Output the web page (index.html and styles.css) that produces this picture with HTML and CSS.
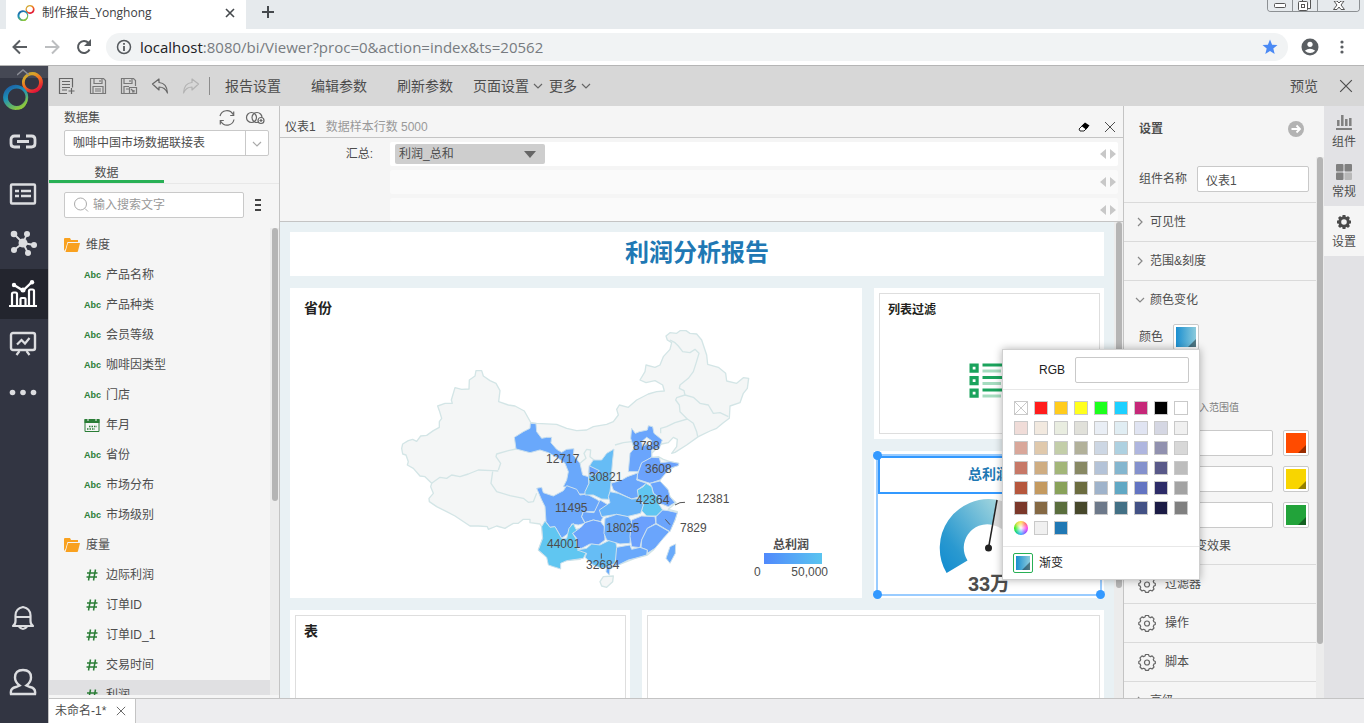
FILE: index.html
```html
<!DOCTYPE html>
<html lang="zh-CN">
<head>
<meta charset="utf-8">
<title>制作报告_Yonghong</title>
<link rel="stylesheet" href="styles.css">
</head>
<body>
<svg class="defs" width="0" height="0" aria-hidden="true">
  <defs>
    <linearGradient id="ringA" x1="0" y1="0" x2=".6" y2="1"><stop offset="0" stop-color="#b7a02e"/><stop offset=".3" stop-color="#d8a52a"/><stop offset=".55" stop-color="#f3701f"/><stop offset="1" stop-color="#e0103a"/></linearGradient>
    <linearGradient id="ringB" x1="0" y1="0" x2=".5" y2="1"><stop offset="0" stop-color="#1d4fa0"/><stop offset=".5" stop-color="#1d93b8"/><stop offset="1" stop-color="#86c440"/></linearGradient>
    <linearGradient id="gaugeFill" x1="0" y1="1" x2="1" y2="0"><stop offset="0" stop-color="#108bd0"/><stop offset=".3" stop-color="#2a99d0"/><stop offset="1" stop-color="#a3d6de"/></linearGradient>
    <symbol id="logo" viewBox="0 0 40 40">
      <path fill="url(#ringA)" fill-rule="evenodd" d="M29 2a10 10 0 1 1-.01 0zM28.500 5a6.800 6.800 0 1 0 .01 0z"/>
      <path fill="url(#ringB)" fill-rule="evenodd" d="M13 14a12 12 0 1 1-.01 0zM14 17.500a8.400 8.400 0 1 0 .01 0z"/>
      <path fill="#8cc63f" d="M23.500 25q.5 6-5 9.500-3.500 2-7 1.500 5 3.500 9.500-.5 4-4 2.500-10.500z"/>
    </symbol>
    <symbol id="gear" viewBox="0 0 18 18"><path fill="none" stroke="#666" stroke-width="1.200" stroke-linejoin="round" d="M7 3 7.500 1.500h3L11 3l1.500.6 1.600-.7 1.900 2-.7 1.600.5 1.300 1.500.7v2l-1.500.6-.5 1.400.7 1.500-1.900 2-1.600-.7-1.500.6-.5 1.400H7.500L7 15.900l-1.500-.6-1.500.7-2-2 .7-1.500-.5-1.400L.8 10.500v-2l1.400-.7.5-1.300L2 4.900l2-2 1.500.7z"/><circle cx="9" cy="9.500" r="2.500" fill="none" stroke="#666" stroke-width="1.200"/></symbol>
    <symbol id="folder" viewBox="0 0 16 14"><path fill="#f9a11f" d="M0 13V1q0-1 1-1h5l1 2h7v2H3.500L1.500 11zM4 5h12l-2 8q0 1-1 1H1.500z"/></symbol>
    <symbol id="hash" viewBox="0 0 12 12"><path fill="none" stroke="#2a7d36" stroke-width="1.500" d="M4.500.5l-2 11M9.500.5l-2 11M1 4h10.500M.5 8H11"/></symbol>
    <symbol id="cross" viewBox="0 0 12 12"><path fill="none" stroke="currentColor" d="M1 1l10 10M11 1L1 11"/></symbol>
    <symbol id="chev" viewBox="0 0 10 10"><path fill="none" stroke="currentColor" stroke-width="1.200" d="M1 3l4 4 4-4"/></symbol>
    <symbol id="chevr" viewBox="0 0 10 10"><path fill="none" stroke="currentColor" stroke-width="1.200" d="M3 1l4 4-4 4"/></symbol>
    <symbol id="pager" viewBox="0 0 16 10"><path fill="#c8c8c8" d="M6 0v10L0 5zM10 0v10l6-5z"/></symbol>
  </defs>
</svg>

<header class="browser">
  <div class="tabstrip">
    <div class="tab">
      <svg width="18" height="18"><use href="#logo"/></svg>
      <span class="tab-title">制作报告_Yonghong</span>
      <button class="plain" aria-label="关闭标签页"><svg class="ink" width="10" height="10" viewBox="0 0 10 10"><path stroke="#45494d" stroke-width="1.600" d="M1 1l8 8M9 1L1 9"/></svg></button>
    </div>
    <button class="plain newtab" aria-label="新标签页"><svg width="12" height="12" viewBox="0 0 12 12"><path stroke="#45494d" stroke-width="2" d="M6 0v12M0 6h12"/></svg></button>
    <div class="winbtns">
      <button aria-label="最小化"><svg width="12" height="5" viewBox="0 0 12 5"><rect x=".5" y=".5" width="11" height="4" rx="1" fill="#fff" stroke="#555"/></svg></button>
      <button aria-label="还原"><svg width="14" height="12" viewBox="0 0 14 12"><path fill="#fff" stroke="#555" d="M4.500 0v2M12.500 0v8.500h-3"/><rect x=".5" y="1.500" width="9" height="9" rx="1" fill="#fff" stroke="#555"/><rect x="3.500" y="4.500" width="3" height="3" fill="none" stroke="#555"/></svg></button>
      <button class="wide" aria-label="关闭"><svg width="12" height="10" viewBox="0 0 12 10"><path fill="#fff" stroke="#555" d="M1 0l3 4-3.500 4.500h3.500l2-2.500 2 2.500h3.500L8 4l3-4H8L6 2 4 0z"/></svg></button>
    </div>
  </div>
  <div class="navbar">
    <button class="plain" aria-label="后退"><svg width="16" height="16" viewBox="0 0 16 16"><path fill="none" stroke="#5a5e62" stroke-width="2" d="M15 8H2M8 1.500L1.500 8 8 14.500"/></svg></button>
    <button class="plain" aria-label="前进"><svg width="16" height="16" viewBox="0 0 16 16"><path fill="none" stroke="#bcbec0" stroke-width="2" d="M1 8h13M8 1.500L14.500 8 8 14.500"/></svg></button>
    <button class="plain" aria-label="刷新"><svg width="16" height="16" viewBox="0 0 16 16"><path fill="none" stroke="#55595d" stroke-width="2" d="M13.500 10.500A6 6 0 1 1 12.500 4"/><path fill="#55595d" d="M15 0v7H8z"/></svg></button>
    <div class="omnibox">
      <svg width="16" height="16" viewBox="0 0 16 16"><circle cx="8" cy="8" r="6.500" fill="none" stroke="#55595d" stroke-width="1.500"/><path stroke="#55595d" stroke-width="1.800" d="M8 7v5M8 4v1.800"/></svg>
      <div class="url" role="textbox" aria-label="地址" contenteditable="true" spellcheck="false"><span class="host">localhost</span>:8080/bi/Viewer?proc=0&amp;action=index&amp;ts=20562</div>
      <svg width="16" height="16" viewBox="0 0 16 16"><path fill="#4a89f4" d="M8 .5l2.100 5.200 5.400.3-4.200 3.500 1.400 5.500L8 12l-4.700 3 1.400-5.500L.5 6l5.400-.3z"/></svg>
    </div>
    <button class="plain" aria-label="用户"><svg width="18" height="18" viewBox="0 0 18 18"><circle cx="9" cy="9" r="8.500" fill="#5a5e62"/><circle cx="9" cy="6.300" r="2.600" fill="#fff"/><path fill="#fff" d="M3.800 12.800q5.200-4 10.400 0-5 4.500-10.400 0z"/></svg></button>
    <button class="plain" aria-label="菜单"><svg width="4" height="14" viewBox="0 0 4 14"><g fill="#5a5e62"><circle cx="2" cy="2" r="1.600"/><circle cx="2" cy="7" r="1.600"/><circle cx="2" cy="12" r="1.600"/></g></svg></button>
  </div>
</header>

<div class="app">
  <nav class="sidenav">
    <div class="brand">
      <svg class="brand-chev" width="12" height="8" viewBox="0 0 12 8"><path fill="none" stroke="#8b8d95" stroke-width="1.500" d="M0 7l6-5 6 5"/></svg>
      <svg class="brand-logo" width="42" height="42"><use href="#logo"/></svg>
    </div>
    <a href="#" aria-label="连接"><svg width="28" height="28" viewBox="0 0 28 28"><path fill="none" stroke="#dcdde0" stroke-width="2.800" d="M11 6H5.500Q2 6 2 9.500v4q0 3.500 3.500 3.500H11M17 6h5.500Q26 6 26 9.500v4q0 3.500-3.500 3.500H17M8 11.500h12"/></svg></a>
    <a href="#" aria-label="数据集"><svg width="28" height="28" viewBox="0 0 28 28"><rect x="2" y="4.500" width="24" height="19" rx="1" fill="none" stroke="#dcdde0" stroke-width="2.400"/><path stroke="#dcdde0" stroke-width="2.600" d="M6 11h4M12 11h10M6 16h4M12 16h10"/></svg></a>
    <a href="#" aria-label="挖掘"><svg width="28" height="28" viewBox="0 0 28 28"><path stroke="#dcdde0" stroke-width="1.800" d="M14 13L5 4M14 13l4-9M14 13l11 2M14 13L5 20M14 13l5 10"/><g fill="#dcdde0"><circle cx="14" cy="13" r="4.500"/><circle cx="5" cy="4" r="3.300"/><circle cx="18" cy="4" r="3"/><circle cx="25" cy="15" r="3"/><circle cx="5" cy="20" r="3"/><circle cx="19" cy="23" r="3"/></g></svg></a>
    <a href="#" class="active" aria-label="制作报告"><svg width="28" height="28" viewBox="0 0 28 28"><path fill="none" stroke="#fff" stroke-width="2.200" d="M0 26h28M3 26V14q0-1.500 1.500-1.500h2Q8 12.500 8 14v12M11.500 26v-7q0-1 1-1h3q1 0 1 1v7M20 26V11q0-1.500 1.500-1.500h2Q25 9.500 25 11v15"/><path fill="none" stroke="#fff" stroke-width="2.400" d="M5 5l9 5.500L23 2"/><circle cx="5" cy="5" r="2.200" fill="#fff"/><circle cx="14" cy="10" r="2.500" fill="#fff"/><circle cx="23" cy="2.200" r="2.200" fill="#fff"/></svg></a>
    <a href="#" aria-label="查看报告"><svg width="28" height="28" viewBox="0 0 28 28"><rect x="2" y="3" width="24" height="17" rx="2" fill="none" stroke="#dcdde0" stroke-width="2.400"/><path fill="none" stroke="#dcdde0" stroke-width="2.200" d="M8 14.500l4.500-4.500 3.500 3.500L20.500 8M10.500 21L7.500 25M17.500 21l3 4"/></svg></a>
    <a href="#" aria-label="更多"><svg width="28" height="28" viewBox="0 0 28 28"><g fill="#dcdde0"><circle cx="3.500" cy="12.500" r="2.800"/><circle cx="14" cy="12.500" r="2.800"/><circle cx="24.500" cy="12.500" r="2.800"/></g></svg></a>
    <div class="spacer"></div>
    <a href="#" class="tall" aria-label="通知"><svg width="28" height="28" viewBox="0 0 28 28"><path fill="none" stroke="#dcdde0" stroke-width="2.200" stroke-linejoin="round" d="M4 22q2.500-1.500 2.500-5v-5.500q0-7 7.500-8.500 7.500 1.500 7.500 8.500V17q0 3.500 2.500 5zM6.500 13h15M10 22.500q4 5 8 0"/></svg></a>
    <a href="#" class="tall" aria-label="用户"><svg width="28" height="28" viewBox="0 0 28 28"><path fill="none" stroke="#dcdde0" stroke-width="2.400" d="M2 26q-1-6 5-7l3.500-1.500Q6 14 6 9.500 6 2 14 2t8 7.500q0 4.500-4.500 8L21 19q6 1 5 7z"/></svg></a>
  </nav>

  <div class="workspace">
    <div class="toolbar">
      <div class="tools">
        <button class="plain" aria-label="新建"><svg width="18" height="18" viewBox="0 0 18 18"><path fill="none" stroke="#666" stroke-width="1.200" d="M9 16.500H1.500V1.500h13v9M4 4.500h8M4 7.500h8M4 10.500h8M4 13h5M13.500 11v6M10.500 14h6"/></svg></button>
        <button class="plain" aria-label="保存"><svg width="18" height="18" viewBox="0 0 18 18"><path fill="none" stroke="#777" stroke-width="1.200" d="M1.500 1.500h13l2 2v13h-15zM5 2v4.500h8V2M11 3v2M4 16V9.500h10V16M6 12h6M6 14h6"/></svg></button>
        <button class="plain" aria-label="另存为"><svg width="18" height="18" viewBox="0 0 18 18"><path fill="none" stroke="#777" stroke-width="1.200" d="M9 16.500H1.500v-15h12l2 2V9M4 2v4.500h8V2M10 3v2M4 16V9.500h5M6 12h3M9.500 10.500h7v6h-7zM11 12l3 3M14 13v2h-2"/></svg></button>
        <button class="plain" aria-label="撤销"><svg width="18" height="18" viewBox="0 0 18 18"><path fill="none" stroke="#666" stroke-width="1.200" stroke-linejoin="round" d="M1.500 7L8 2v3.500q8 .5 8.500 10.500Q14 10 8 10v3z"/></svg></button>
        <button class="plain" aria-label="重做"><svg width="18" height="18" viewBox="0 0 18 18"><path fill="none" stroke="#b3b3b3" stroke-width="1.200" stroke-linejoin="round" d="M16.500 7L10 2v3.500Q2 6 1.500 16 4 10 10 10v3z"/></svg></button>
      </div>
      <div class="menus">
        <button class="menu">报告设置</button>
        <button class="menu">编辑参数</button>
        <button class="menu">刷新参数</button>
      </div>
      <button class="menu drop">页面设置 <svg width="10" height="10"><use href="#chev"/></svg></button>
      <button class="menu drop">更多 <svg width="10" height="10"><use href="#chev"/></svg></button>
      <div class="spacer"></div>
      <button class="menu">预览</button>
      <button class="plain exit" aria-label="退出"><svg width="14" height="14"><use href="#cross"/></svg></button>
    </div>

    <div class="main">
      <aside class="data">
        <div class="data-head">
          <label for="dataset">数据集</label>
          <span class="data-icons">
            <button class="plain" aria-label="刷新数据"><svg width="18" height="18" viewBox="0 0 18 18"><path fill="none" stroke="#666" stroke-width="1.200" d="M2 7a7 7 0 0 1 13-1.500M16 10.500a7 7 0 0 1-13 2M15.700 2.500v4h-3.500M2.300 15.500v-4h3.500"/></svg></button>
            <button class="plain" aria-label="关联数据"><svg width="20" height="14" viewBox="0 0 20 14"><g fill="none" stroke="#666" stroke-width="1.200"><circle cx="6.500" cy="6.500" r="5"/><circle cx="12" cy="6.500" r="5"/><circle cx="16" cy="9.500" r="3" fill="#f5f5f5"/><path d="M14.500 9.500h3M16 8v3"/></g></svg></button>
          </span>
        </div>
        <div class="dataset">
          <select id="dataset"><option>咖啡中国市场数据联接表</option></select>
          <svg width="10" height="10"><use href="#chev"/></svg>
        </div>
        <div class="data-tabs"><button class="data-tab">数据</button></div>
        <div class="search-row">
          <div class="search">
            <svg width="16" height="16" viewBox="0 0 16 16"><circle cx="7.500" cy="7" r="6" fill="none" stroke="#aaa"/><path stroke="#aaa" d="M12 11.500l3 3"/></svg>
            <input type="text" aria-label="搜索" placeholder="输入搜索文字">
          </div>
          <button class="plain" aria-label="选项"><svg width="8" height="14" viewBox="0 0 8 14"><path stroke="#444" stroke-width="2" d="M1 2h6M1 7h6M1 12h6"/></svg></button>
        </div>
        <div class="tree-wrap">
          <ul class="tree">
            <li class="group"><svg width="16" height="14"><use href="#folder"/></svg>维度</li>
            <li><b class="abc">Abc</b>产品名称</li>
            <li><b class="abc">Abc</b>产品种类</li>
            <li><b class="abc">Abc</b>会员等级</li>
            <li><b class="abc">Abc</b>咖啡因类型</li>
            <li><b class="abc">Abc</b>门店</li>
            <li><svg class="ico" width="16" height="14" viewBox="0 0 16 14"><path fill="none" stroke="#2a7d36" d="M1 1.500h14v12H1z"/><path fill="#2a7d36" d="M.5 1h15v4H.5z"/><path stroke="#f5f5f5" d="M4 0v3M12 0v3"/><path stroke="#2a7d36" stroke-width="1.500" stroke-dasharray="1.500 1" d="M5 8.500h8M3 11h8"/></svg>年月</li>
            <li><b class="abc">Abc</b>省份</li>
            <li><b class="abc">Abc</b>市场分布</li>
            <li><b class="abc">Abc</b>市场级别</li>
            <li class="group"><svg width="16" height="14"><use href="#folder"/></svg>度量</li>
            <li><svg class="ico" width="16" height="12"><use href="#hash"/></svg>边际利润</li>
            <li><svg class="ico" width="16" height="12"><use href="#hash"/></svg>订单ID</li>
            <li><svg class="ico" width="16" height="12"><use href="#hash"/></svg>订单ID_1</li>
            <li><svg class="ico" width="16" height="12"><use href="#hash"/></svg>交易时间</li>
            <li class="hover"><svg class="ico" width="16" height="12"><use href="#hash"/></svg>利润</li>
          </ul>
          <div class="scroll"><i class="thumb tree-thumb"></i></div>
        </div>
      </aside>

      <section class="center">
        <div class="bind-head">
          <span>仪表1</span><span class="muted">数据样本行数 5000</span>
          <div class="spacer"></div>
          <button class="plain" aria-label="清除"><svg width="12" height="10" viewBox="0 0 12 10"><path fill="#fff" stroke="#222" d="M1 7l5-5 4 3-4 4H2z"/><path d="M3.500 4L7 .5l4.500 3L8 7.500z"/></svg></button>
          <button class="plain" aria-label="关闭绑定"><svg width="12" height="12"><use href="#cross"/></svg></button>
        </div>
        <div class="bind">
          <label class="bind-label" for="agg">汇总:</label>
          <div class="shelves">
            <div class="shelf"><span class="pill"><select id="agg"><option>利润_总和</option></select><svg width="12" height="7" viewBox="0 0 12 7"><path fill="#666" d="M0 0h12L6 7z"/></svg></span><svg class="pager" width="16" height="10"><use href="#pager"/></svg></div>
            <div class="shelf dim"><svg class="pager" width="16" height="10"><use href="#pager"/></svg></div>
            <div class="shelf dim"><svg class="pager" width="16" height="10"><use href="#pager"/></svg></div>
          </div>
        </div>
        <div class="canvas">
          <div class="board">
            <h1 class="card board-title">利润分析报告</h1>
            <div class="row">
              <div class="card map-card">
                <h2 class="card-title">省份</h2>
                <svg class="map" viewBox="290 320 572 278" role="img" aria-label="各省份利润">
                  <g transform="translate(390 320) scale(.33333)" stroke="#d3e5e6" stroke-width="4" stroke-linejoin="round">
                    <path fill="#f4f6f6" d="M35 385L38 372 55 362 68 358 80 364 92 348 110 346 130 332 148 322 148 305 155 295 148 272 143 258 165 250 187 250 184 240 195 203 215 208 237 207 238 180 255 168 258 152 275 152 280 168 300 182 318 190 330 212 326 245 355 255 375 258 403 273 422 307 440 310 500 313 530 325 560 332 590 330 610 320 650 313 670 305 685 285 680 268 688 255 715 262 740 240 775 222 800 215 823 213 818 195 795 182 768 188 750 180 765 155 768 135 795 142 810 135 820 110 840 88 845 68 832 60 828 48 840 38 860 40 870 32 888 32 900 40 920 42 935 60 950 105 953 133 985 142 1007 160 1010 183 1040 190 1060 173 1076 175 1072 205 1060 220 1050 248 1020 258 1018 295 1000 308 980 325 960 333 925 350 890 375 855 397 845 400 860 380 862 358 850 352 835 368 815 372 795 390 785 400 785 412 805 410 820 418 840 425 865 430 820 465 808 485 830 505 840 530 858 548 835 568 862 575 855 600 845 620 820 650 790 690 772 705 735 715 685 735 660 745 610 735 586 705 570 718 530 722 470 712 445 690 458 655 455 620 450 612 420 608 420 598 400 598 385 610 370 610 345 625 320 618 295 628 292 620 265 618 240 618 195 588 170 575 140 560 118 545 117 535 130 520 122 500 125 490 105 470 90 468 70 445 52 435 55 425 48 405 38 402z"/>
                    <path fill="#f4f6f6" d="M630 785L640 770 670 768 668 785 650 802 635 798z"/>
                    <path fill="none" d="M125 490L150 472 170 475 185 465 210 470 235 462 265 450 308 452 325 453M325 450L332 430 318 410 320 402 355 392 378 387M308 455L303 490 320 515 360 527 400 535 415 547 430 545 440 520M840 60L855 68 865 78 878 95 900 98 915 88 927 100 918 130 910 155 895 175 870 195 868 205 882 212 885 225 860 233 857 240 868 255 870 275 885 290 892 297 855 308 830 320 812 325 812 340M885 225L910 232 930 250 955 255 970 280 990 278 1015 290M892 297L910 310 920 335 923 350M675 375L700 368 725 365M570 430L588 415 582 400 590 388 602 390 600 410 615 422"/>
                    <g stroke="#cbe0ed" stroke-width="3">
                      <path fill="#69a8fb" d="M421 310L438 311 440 335 455 355 470 352 485 352 483 368 500 388 515 397 530 388 552 386 550 405 570 430 578 465 595 470 597 490 585 522 565 522 550 505 520 500 530 480 535 455 525 430 505 415 475 398 450 390 420 398 378 387 373 352 400 335 420 325z"/>
                      <path fill="#6aa7fb" d="M440 505L455 502 460 518 490 528 520 512 530 497 560 508 570 525 590 522 620 538 630 545 615 575 580 575 575 590 585 610 565 615 545 612 535 640 515 655 495 620 480 622 468 605 465 560 455 540z"/>
                      <path fill="#6aa5fb" d="M630 540L655 555 640 570 632 575 640 590 632 605 610 600 585 608 575 590 580 575 612 578z"/>
                      <path fill="#60c6f1" d="M455 620L465 603 480 622 495 620 515 655 530 655 537 625 550 610 558 628 572 625 565 635 548 640 560 660 562 685 590 695 580 715 530 722 512 730 512 747 490 740 475 735 470 712 445 690 458 655z"/>
                      <path fill="#6ba2fc" d="M548 640L575 620 585 608 610 600 632 605 643 620 645 660 625 675 600 672 575 685 562 683 560 655z"/>
                      <path fill="#66bdf5" d="M562 690L590 685 605 672 630 675 650 665 675 653 680 680 688 690 675 730 655 740 635 745 610 735 585 712 590 700z"/>
                      <path fill="#66bcf5" d="M610 420L635 420 650 400 672 387 668 420 665 455 663 490 660 515 655 538 635 537 610 525 585 525 585 515 597 490 595 455 600 435z"/>
                      <path fill="#6ba3fc" d="M597 437L628 452 615 465 597 465z"/>
                      <path fill="#6aa6fb" d="M663 490L695 480 712 470 745 458 740 480 770 490 742 510 750 530 725 537 685 518 670 510z"/>
                      <path fill="#6aa5fc" fill-rule="evenodd" d="M725 325L736 340 748 335 772 330 775 317 788 320 792 340 817 360 808 385 785 390 785 412 755 430 745 455 715 455 720 400 732 385 722 355zM755 365L770 352 785 362 780 378 770 372 758 380z"/>
                      <path fill="#6ba2fc" d="M742 465L755 428 785 412 808 413 812 428 840 425 867 430 865 437 840 445 810 480 780 490 742 478z"/>
                      <path fill="#6aa4fc" d="M780 490L810 483 835 510 840 530 855 548 835 560 805 548 810 535 790 520 785 500z"/>
                      <path fill="#60c6f1" d="M742 510L760 500 768 490 785 500 790 520 810 535 805 550 818 570 800 588 770 588 755 572 760 550 745 530z"/>
                      <path fill="#67b3f8" d="M660 515L685 520 725 537 750 535 760 555 752 580 710 590 680 583 635 590 628 570 660 548 655 530z"/>
                      <path fill="#69aafa" d="M645 595L680 583 715 590 725 605 720 670 690 672 650 660 642 640z"/>
                      <path fill="#6ba0fd" d="M725 600L755 588 795 590 798 610 772 625 755 660 750 683 725 680 720 650z"/>
                      <path fill="#6aa4fc" d="M798 590L818 570 835 572 862 578 855 600 840 635 815 620 798 610z"/>
                      <path fill="#6aa5fc" d="M772 625L798 612 815 622 838 635 820 655 795 685 772 700 772 690 753 683 755 660z"/>
                      <path fill="#69a9fb" d="M680 682L720 675 725 688 750 682 772 690 770 705 735 715 715 720 685 735 660 745 658 765 648 755 650 740 675 735z"/>
                      <path fill="#69aafa" d="M840 680L857 672 856 700 840 730 828 715z"/>
                    </g>
                    <path fill="none" stroke="#555" stroke-width="3" d="M855 555L870 548 885 547M826 598L840 614M634 700V716"/>
                  </g>
                  <g class="map-labels">
                    <text x="546" y="463">12717</text><text x="589" y="481">30821</text><text x="633" y="450">8788</text><text x="645" y="473">3608</text><text x="636" y="504">42364</text><text x="696" y="503">12381</text><text x="680" y="532">7829</text><text x="555" y="512">11495</text><text x="606" y="532">18025</text><text x="547" y="548">44001</text><text x="586" y="569">32684</text>
                  </g>
                </svg>
                <div class="legend"><b>总利润</b><i class="ramp"></i><span class="ends"><span>0</span><span>50,000</span></span></div>
              </div>
              <div class="col">
                <div class="card framed filter"><div class="frame">
                  <h2 class="small-title">列表过滤</h2>
                  <svg class="list-ico" width="42" height="36" viewBox="0 0 42 36"><path fill="none" stroke="#1aa35c" stroke-width="3.200" d="M2.100 2.100h6v6h-6zM2.100 14.600h6v6h-6zM2.100 27.100h6v6h-6z"/><path stroke="#1aa35c" stroke-width="3" d="M13.500 2H42M13.500 14.500H42M13.500 27H42"/><path stroke="#a5dcbf" stroke-width="3" d="M13.500 8H32M13.500 20.500H32M13.500 33H32"/></svg>
                </div></div>
                <div class="card gauge">
                  <div class="select-box">
                    <h2 class="gauge-title">总利润</h2>
                    <svg width="112" height="80" viewBox="0 0 112 80"><path fill="#dcdcdc" d="M63.900 3.700A49 49 0 0 1 97.400 76.500L75.400 64A23.500 23.500 0 0 0 59.600 28.900z"/><path fill="url(#gaugeFill)" d="M13.600 77A49 49 0 0 1 63.900 3.700L59.600 28.900A23.500 23.500 0 0 0 34.500 64.500z"/><path stroke="#222" stroke-width="1.500" d="M55.500 52L64 4"/><circle cx="55.500" cy="52" r="3.500" fill="#222"/></svg>
                    <strong class="gauge-value">33万</strong>
                    <i class="handle tl"></i><i class="handle tr"></i><i class="handle bl"></i><i class="handle br"></i>
                  </div>
                </div>
              </div>
            </div>
            <div class="row last">
              <div class="card framed"><div class="frame"><h2 class="inner-title">表</h2></div></div>
              <div class="card framed"><div class="frame"></div></div>
            </div>
          </div>
          <div class="scroll"><i class="thumb canvas-thumb"></i></div>
        </div>
      </section>

      <aside class="settings">
        <div class="settings-head"><b>设置</b><button class="plain" aria-label="收起"><svg width="16" height="16" viewBox="0 0 16 16"><circle cx="8" cy="8" r="8" fill="#b3b3b3"/><path fill="none" stroke="#fff" stroke-width="1.800" d="M3.500 8h8M8.500 4.500L12 8l-3.500 3.500"/></svg></button></div>
        <div class="settings-scroll">
          <div class="settings-body">
            <div class="field"><label for="cname">组件名称</label><input id="cname" type="text" value="仪表1"></div>
            <button class="sect"><svg width="10" height="10"><use href="#chevr"/></svg>可见性</button>
            <button class="sect"><svg width="10" height="10"><use href="#chevr"/></svg>范围&amp;刻度</button>
            <button class="sect"><svg width="10" height="10"><use href="#chev"/></svg>颜色变化</button>
            <div class="color-sect">
              <div class="color-row"><span>颜色</span><button class="swatch" aria-label="颜色"><i class="grad"></i></button></div>
              <p class="hint">输入范围值</p>
              <div class="range"><input type="text" aria-label="范围一"><button class="swatch" aria-label="红色"><i class="red"></i></button></div>
              <div class="range"><input type="text" aria-label="范围二"><button class="swatch" aria-label="黄色"><i class="yellow"></i></button></div>
              <div class="range"><input type="text" aria-label="范围三"><button class="swatch" aria-label="绿色"><i class="green"></i></button></div>
              <label class="effect"><input type="checkbox">渐变效果</label>
            </div>
            <button class="sect wide-ico"><svg width="18" height="18"><use href="#gear"/></svg>过滤器</button>
            <button class="sect wide-ico"><svg width="18" height="18"><use href="#gear"/></svg>操作</button>
            <button class="sect wide-ico"><svg width="18" height="18"><use href="#gear"/></svg>脚本</button>
            <button class="sect"><svg width="10" height="10"><use href="#chevr"/></svg>高级</button>
          </div>
          <div class="scroll"><i class="thumb settings-thumb"></i></div>
        </div>

        <div class="picker" role="dialog" aria-label="选择颜色">
          <div class="rgb"><label for="rgb">RGB</label><input id="rgb" type="text"></div>
          <div class="palette">
            <button class="none" aria-label="无颜色"></button><button style="background:#ff1c1c"></button><button style="background:#ffcc1c"></button><button style="background:#ffff1c"></button><button style="background:#1cff1c"></button><button style="background:#1cd0ff"></button><button style="background:#c62879"></button><button style="background:#000000"></button><button style="background:#ffffff"></button>
            <button style="background:#f0dcd8"></button><button style="background:#f2e9df"></button><button style="background:#e9ede0"></button><button style="background:#e1e1da"></button><button style="background:#e9eef5"></button><button style="background:#e0edf3"></button><button style="background:#e0e4f2"></button><button style="background:#d5d7e3"></button><button style="background:#f0f0f0"></button>
            <button style="background:#d9a79a"></button><button style="background:#e0c9ac"></button><button style="background:#c3cea9"></button><button style="background:#b2b19a"></button><button style="background:#cdd7e4"></button><button style="background:#aed1e1"></button><button style="background:#afb6df"></button><button style="background:#9191af"></button><button style="background:#d8d8d8"></button>
            <button style="background:#c77867"></button><button style="background:#cfad82"></button><button style="background:#a3b679"></button><button style="background:#888964"></button><button style="background:#b4c3d8"></button><button style="background:#84b6cf"></button><button style="background:#8491cd"></button><button style="background:#595989"></button><button style="background:#bdbdbd"></button>
            <button style="background:#b6573d"></button><button style="background:#c49a60"></button><button style="background:#89a25a"></button><button style="background:#6c6d40"></button><button style="background:#9fb3cb"></button><button style="background:#61a8c4"></button><button style="background:#6374c2"></button><button style="background:#2d2c68"></button><button style="background:#a3a3a3"></button>
            <button style="background:#7b382a"></button><button style="background:#856944"></button><button style="background:#5a6e3d"></button><button style="background:#47482b"></button><button style="background:#6d798a"></button><button style="background:#437085"></button><button style="background:#435185"></button><button style="background:#1b1b45"></button><button style="background:#808080"></button>
            <button class="wheel" aria-label="更多颜色"></button><button style="background:#f0f0f0"></button><button style="background:#2078b4"></button>
          </div>
          <div class="grad-row"><button id="gradbtn" class="grad-btn" aria-label="渐变"><i class="grad"></i></button><label for="gradbtn">渐变</label></div>
        </div>
      </aside>

      <nav class="rail">
        <button><svg width="16" height="16" viewBox="0 0 16 16"><path stroke="#808080" stroke-width="2" d="M0 15h16"/><path stroke="#808080" stroke-width="2.500" d="M2.300 12V6M6.300 12V1M10.300 12V5M14.300 12V4"/></svg>组件</button>
        <button><svg width="16" height="16" viewBox="0 0 16 16"><g fill="#808080"><rect width="7.500" height="7.500" rx="1"/><rect x="8.500" width="7.500" height="7.500" rx="1"/><rect y="8.500" width="7.500" height="7.500" rx="1"/></g><rect x="8.500" y="8.500" width="7.500" height="7.500" rx="1" fill="#b8b8b8"/></svg>常规</button>
        <button class="on"><svg width="16" height="16" viewBox="0 0 16 16"><circle cx="8" cy="8" r="4.300" fill="none" stroke="#4a4a4a" stroke-width="3"/><path stroke="#4a4a4a" stroke-width="3" d="M8 1v2.500M8 12.500V15M1 8h2.500M12.500 8H15M3 3l2 2M11 11l2 2M13 3l-2 2M5 11l-2 2"/></svg>设置</button>
      </nav>
    </div>

    <footer class="sheets"><div class="sheet">未命名-1*<button class="plain" aria-label="关闭"><svg width="10" height="10"><use href="#cross"/></svg></button></div></footer>
  </div>
</div>
</body>
</html>
```

FILE: styles.css
```css
* { box-sizing: border-box; }
body {
  margin: 0; height: 100vh; overflow: hidden;
  display: flex; flex-direction: column;
  font: 12px/16px "Liberation Sans", "Noto Sans CJK SC", sans-serif;
  color: #4d4d4d; background: #f5f5f5;
}
h1, h2, p, ul { margin: 0; padding: 0; list-style: none; }
button, input, select { font: inherit; color: inherit; }
button { cursor: pointer; }
svg { display: block; flex: none; }
i { display: block; }
.defs { position: absolute; }
.plain { display: flex; align-items: center; justify-content: center; padding: 0; border: 0; background: none; }
.spacer { flex: 1; }

/* browser window */
.browser { flex: none; border-bottom: 1px solid #b5b5b5; background: #fff; }
.tabstrip { height: 29px; display: flex; align-items: flex-start; background: #e6eaed; padding-left: 6px; }
.tab { display: flex; align-items: center; width: 240px; height: 29px; padding: 0 11px 4px 11px; gap: 7px; background: #fff; }
.tab-title { flex: 1; font: 12px/18px "Open Sans", "Noto Sans CJK SC", sans-serif; color: #3c4043; }
.newtab { height: 24px; margin-left: 16px; }
.winbtns { display: flex; margin-left: auto; margin-right: 4px; height: 12px; border: 1px solid #8c9093; border-top: 0; border-radius: 0 0 4px 4px; overflow: hidden; }
.winbtns button { width: 25px; height: 11px; padding: 0; border: 0; border-right: 1px solid #8c9093; background: #e6eaed; display: flex; align-items: center; justify-content: center; }
.winbtns .wide { width: 41px; border-right: 0; }
.navbar { height: 36px; display: flex; align-items: center; gap: 16px; padding: 0 20px 0 12px; }
.omnibox { flex: 1; display: flex; align-items: center; gap: 8px; height: 28px; margin-left: -2px; margin-right: -3px; padding: 0 10px; border-radius: 14px; background: #f1f3f4; }
.omnibox + .plain { margin-right: 5px; }
.url { flex: 1; font: 15px/20px "Open Sans", sans-serif; color: #777b80; outline: 0; white-space: nowrap; }
.host { color: #202124; }

/* application frame */
.app { flex: 1; min-height: 0; display: flex; }
.sidenav { flex: none; width: 48px; display: flex; flex-direction: column; padding-bottom: 9px; background: #323542; }
.brand { position: relative; height: 53px; padding: 4px 2px; background: linear-gradient(#454854 12px, #323542 12px); }
.brand-chev { position: absolute; left: 17px; top: 2px; }
.sidenav a { height: 50px; display: flex; align-items: center; padding-left: 9px; }
.sidenav a.tall { height: 64px; }
.sidenav .active { background: #23252e; }
.workspace { flex: 1; min-width: 0; display: flex; flex-direction: column; border-left: 1px solid #c4c4c4; }
.toolbar { flex: none; height: 40px; display: flex; align-items: center; padding: 0 11px 0 9px; background: #d7d7d7; }
.tools { display: flex; gap: 13px; padding-right: 9px; border-right: 1px solid #8c8c8c; }
.menus { display: flex; gap: 30px; padding: 0 20px 0 15px; }
.menu { border: 0; padding: 0; background: none; font-size: 14px; line-height: 20px; }
.menu svg { color: #666; }
.drop { display: flex; align-items: center; gap: 4px; margin-right: 6px; }
.exit { margin-left: 21px; }
.main { flex: 1; min-height: 0; display: flex; }
.scroll { flex: none; width: 9px; padding: 0 1px 0 2px; background: #ececec; }
.thumb { width: 6px; height: 50%; border-radius: 3px; background: #b5b5b5; }

/* data panel */
.data { flex: none; width: 231px; display: flex; flex-direction: column; padding-bottom: 3px; border-right: 1px solid #c4c4c4; background: #f5f5f5; }
.data-head { height: 24px; display: flex; justify-content: space-between; align-items: center; padding: 0 14px 0 15px; }
.data-icons { display: flex; gap: 9px; }
.dataset { position: relative; margin: 0 10px 0 15px; }
.dataset select { display: block; appearance: none; width: 100%; height: 26px; padding: 0 24px 0 8px; border: 1px solid #c9c9c9; border-radius: 2px; background: linear-gradient(90deg, #c9c9c9 1px, #fff 1px) right / 23px 100% no-repeat #fff; }
.dataset svg { position: absolute; right: 7px; top: 9px; color: #aaa; }
.data-tabs { height: 28px; border-bottom: 1px solid #e8e8e8; }
.data-tab { display: block; width: 115px; height: 27px; padding: 7px 0 0; border: 0; border-bottom: 3px solid #28b055; background: none; line-height: 20px; }
.search-row { display: flex; align-items: center; gap: 10px; padding: 8px 17px 10px 15px; }
.search { flex: 1; display: flex; align-items: center; height: 26px; padding-left: 8px; gap: 2px; border: 1px solid #c9c9c9; border-radius: 2px; background: #fff; }
.search input { width: 100%; min-width: 0; border: 0; outline: 0; background: none; }
.search input::placeholder { color: #999; }
.tree-wrap { flex: 1; min-height: 0; display: flex; }
.tree { flex: 1; overflow: hidden; padding-top: 2px; }
.tree li { display: flex; align-items: center; height: 30px; padding-left: 35px; gap: 6px; }
.tree .group { padding-left: 15px; }
.tree .hover { background: #e0e0e2; }
.abc { width: 16px; font-size: 9px; color: #2a7d36; white-space: nowrap; }
.tree-thumb { height: 273px; max-height: 100%; }

/* binding area */
.center { flex: 1; min-width: 0; display: flex; flex-direction: column; }
.bind-head { height: 32px; display: flex; align-items: center; gap: 10px; padding: 10px 7px 0 5px; border-bottom: 1px solid #c4c4c4; }
.bind-head .plain { margin-left: 4px; }
.muted { color: #999; }
.bind { display: flex; padding-top: 4px; border-bottom: 1px solid #c4c4c4; }
.bind-label { width: 110px; padding: 4px 17px 0 0; text-align: right; }
.shelves { flex: 1; display: grid; gap: 4px; padding-right: 5px; }
.shelf { height: 24px; display: flex; align-items: center; padding: 0 2px 0 5px; background: #fff; border-radius: 2px; }
.shelf.dim { background: #fafafa; }
.shelf:last-child { height: 23px; }
.pager { margin-left: auto; }
.pill { position: relative; width: 150px; }
.pill select { display: block; appearance: none; width: 100%; height: 20px; padding: 0 4px; border: 0; border-radius: 2px; background: #cecece; }
.pill svg { position: absolute; right: 9px; top: 7px; }

/* dashboard */
.canvas { flex: 1; min-height: 0; display: flex; background: #e9f1f4; }
.board { flex: 1; min-width: 0; display: flex; flex-direction: column; gap: 12px; padding: 10px 10px 0; overflow: hidden; }
.canvas-thumb { height: 366px; max-height: 100%; }
.card { background: #fff; }
.board-title { flex: none; height: 44px; text-align: center; font-size: 24px; line-height: 42px; color: #2078b4; }
.row { flex: none; display: flex; gap: 12px; min-height: 310px; }
.row.last { display: grid; grid-template-columns: 14fr 19fr; min-height: 160px; }
.map-card { position: relative; flex: 1; min-width: 0; display: flex; flex-direction: column; }
.card-title { padding: 10px 14px 2px; font-size: 14px; line-height: 20px; color: #231f20; }
.map { flex: 1; width: 100%; min-height: 0; }
.map-labels { font-size: 12px; fill: #4d4d4d; }
.legend { position: absolute; right: 34px; bottom: 18px; width: 74px; text-align: center; }
.ramp { width: 58px; height: 11px; margin: 0 10px; background: linear-gradient(90deg, #5089fc, #5ac4f0); }
.ends { display: flex; justify-content: space-between; }
.col { flex: none; width: 230px; display: flex; flex-direction: column; gap: 12px; }
.framed { padding: 5px 4px 5px 5px; }
.frame { height: 100%; border: 1px solid #dedede; }
.filter { flex: 1; }
.small-title { padding: 8px; font-size: 12px; line-height: 16px; color: #231f20; }
.list-ico { margin: 37px auto 0; }
.inner-title { padding: 5px 8px; font-size: 14px; line-height: 20px; color: #231f20; }
.gauge { flex: none; padding: 3px 2px 2px; }
.select-box { position: relative; display: flex; flex-direction: column; align-items: center; height: 142px; border: 2px solid #99ccff; }
.gauge-title { align-self: stretch; height: 38px; margin-bottom: 2px; border: 2px solid #3399ff; text-align: center; font-size: 14px; line-height: 32px; color: #2078b4; }
.gauge-value { font-size: 20px; line-height: 16px; }
.handle { position: absolute; width: 9px; height: 9px; border-radius: 50%; background: #3399ff; }
.tl { left: -5px; top: -5px; } .tr { right: -5px; top: -5px; }
.bl { left: -5px; bottom: -5px; } .br { right: -5px; bottom: -5px; }

/* settings panel */
.settings { position: relative; flex: none; width: 201px; display: flex; flex-direction: column; border-left: 1px solid #c4c4c4; background: #f5f5f5; }
.settings-head { height: 51px; display: flex; justify-content: space-between; align-items: center; padding: 0 20px 6px 15px; }
.settings-scroll { flex: 1; min-height: 0; display: flex; }
.settings-body { flex: 1; min-width: 0; overflow: hidden; }
.settings .scroll { width: 8px; padding: 0 1px; }
.settings-thumb { height: 487px; max-height: 100%; }
.settings input[type="text"] { height: 26px; min-width: 0; padding: 0 8px; border: 1px solid #c9c9c9; border-radius: 2px; background: #fff; }
.field { display: flex; align-items: center; gap: 10px; height: 45px; padding: 0 7px 1px 15px; }
.field label { flex: none; }
.field input { flex: 1; }
.sect { width: 100%; height: 39px; display: flex; align-items: center; gap: 5px; padding: 0 11px; border: 0; border-top: 1px solid #dadada; background: none; text-align: left; }
.sect svg { color: #888; }
.wide-ico { gap: 9px; padding-left: 14px; }
.color-sect { padding: 5px 7px 10px 15px; }
.color-row { display: flex; align-items: center; gap: 10px; }
.swatch { flex: none; width: 26px; height: 26px; padding: 2px; border: 1px solid #c9c9c9; border-radius: 2px; background: #fff; }
.swatch i { height: 20px; position: relative; }
.swatch i::after, .grad-btn i::after { content: ""; position: absolute; right: 0; bottom: 0; border: 4px solid; border-color: transparent rgba(0, 0, 0, .4) rgba(0, 0, 0, .4) transparent; }
.grad { background: linear-gradient(90deg, #1b8fd0, #8ccbdc); }
.red { background: #ff4b00; } .yellow { background: #f8d500; } .green { background: #22a33a; }
.hint { margin: 48px 0 12px; padding-left: 50px; font-size: 10px; line-height: 20px; color: #808080; }
.range { display: flex; gap: 10px; margin-bottom: 10px; }
.range input { flex: 1; }
.effect { display: flex; align-items: center; gap: 8px; padding-left: 24px; line-height: 16px; }
.effect input { width: 12px; height: 12px; margin: 0; }

/* colour picker */
.picker { position: absolute; right: 124px; top: 243px; width: 198px; border: 1px solid #d0d0d0; background: #fff; box-shadow: 0 0 8px rgba(0, 0, 0, .3); color: #222; }
.rgb { display: flex; align-items: center; justify-content: flex-end; gap: 10px; padding: 7px 10px 6px; border-bottom: 1px solid #e8e8e8; }
.rgb input { width: 114px; }
.palette { display: grid; grid-template-columns: repeat(9, 14px); gap: 6px; padding: 11px 11px 11px; }
.palette button { width: 14px; height: 14px; padding: 0; border: 1px solid #c9c9c9; }
.palette .none { background: linear-gradient(45deg, transparent 47%, #c9c9c9 47% 53%, transparent 53%), linear-gradient(-45deg, #fff 47%, #c9c9c9 47% 53%, #fff 53%); }
.palette .wheel { border: 0; border-radius: 50%; background: radial-gradient(#fff, transparent 70%), conic-gradient(#fd4, #f66, #f3e, #84f, #3af, #0c8, #2e0, #cd3, #fd4); }
.grad-row { display: flex; align-items: center; gap: 6px; padding: 6px 10px; border-top: 1px solid #e8e8e8; }
.grad-btn { width: 20px; height: 20px; padding: 2px; border: 1px solid #28b055; border-radius: 2px; background: #fff; }
.grad-btn i { position: relative; height: 14px; }

/* right rail */
.rail { flex: none; width: 40px; background: #e2e2e5; }
.rail button { width: 40px; height: 50px; display: flex; flex-direction: column; align-items: center; gap: 4px; padding: 8px 0 0; border: 0; background: none; line-height: 16px; }
.rail .on { background: #f5f5f5; }

/* sheet tabs */
.sheets { flex: none; height: 25px; display: flex; align-items: stretch; background: #ededef; border-top: 1px solid #c4c4c4; }
.sheet { display: flex; align-items: center; gap: 10px; padding: 0 9px 0 6px; border-right: 1px solid #c4c4c4; background: #fff; }
```
